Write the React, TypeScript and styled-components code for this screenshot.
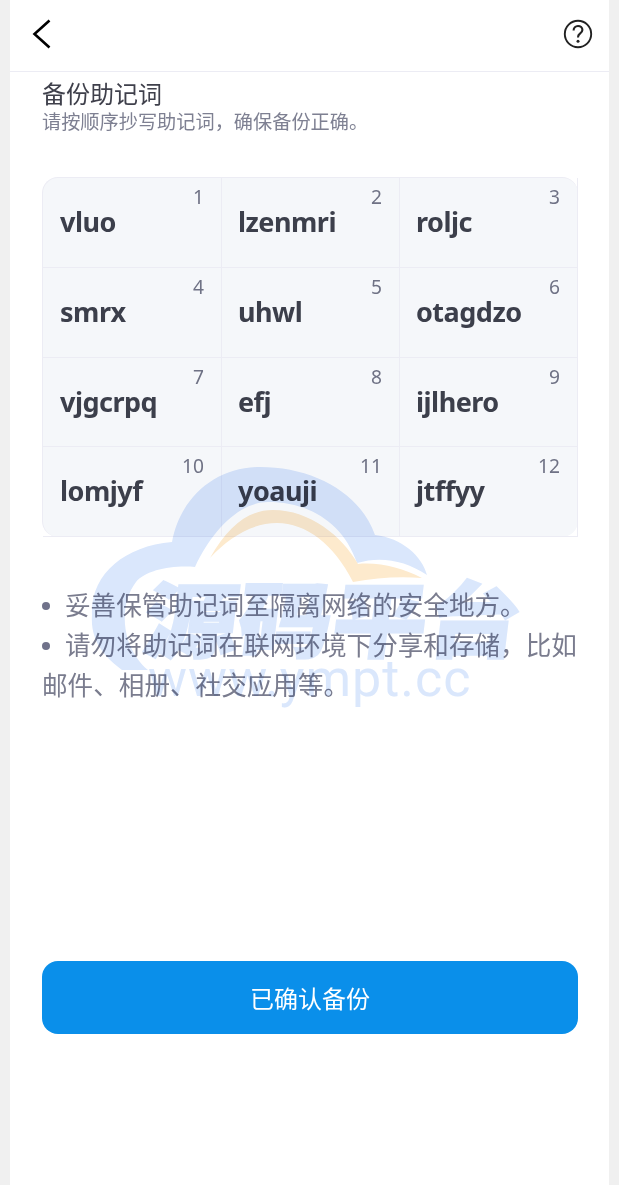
import React from "react";
import styled, { createGlobalStyle } from "styled-components";

const CJK = `"Noto Sans", "Noto Sans CJK SC", sans-serif`;

const Global = createGlobalStyle`
  html, body { margin: 0; padding: 0; background: #f0f0f0; }
  * { box-sizing: border-box; }
`;

const Page = styled.div`
  position: relative;
  margin: 0 10px;
  height: 1185px;
  overflow: hidden;
  background: #fff;
  font-family: ${CJK};
`;

const TopBar = styled.header`
  display: flex;
  align-items: center;
  justify-content: space-between;
  height: 72px;
  padding: 0 16px 4px 20px;
  border-bottom: 1px solid #ececf4;
`;

const IconButton = styled.div`
  display: flex;
  color: ${(p: { $color: string }) => p.$color};
`;

const Main = styled.main`
  display: flex;
  flex-direction: column;
  padding: 0 31px 0 32px;
`;

const Title = styled.h1`
  margin: 8px 0 0;
  font-size: 24px;
  line-height: 28px;
  font-weight: 400;
  color: #3f404b;
`;

const Subtitle = styled.p`
  margin: 0;
  font-size: 19.2px;
  line-height: 28px;
  color: #7e8092;
`;

const Grid = styled.section`
  display: grid;
  grid-template-columns: 179px 178px 178px;
  grid-template-rows: repeat(4, 89.75px);
  margin-top: 41px;
  background: #f5f7fa;
  border-radius: 16px;
  border-top: 1px solid #ececf4;
  border-left: 1px solid #ececf4;
`;

const Cell = styled.div`
  display: flex;
  flex-direction: column;
  padding: 8px 17px 0 16px;
  border-right: 1px solid #ececf4;
  border-bottom: 1px solid #ececf4;

  &:nth-child(3n + 1) {
    padding-left: 17px;
  }
`;

const Index = styled.span`
  align-self: flex-end;
  font-size: 19.2px;
  line-height: 21px;
  color: #6f7285;
`;

const Word = styled.span`
  margin-top: -3px;
  font-size: 27px;
  line-height: 36px;
  font-weight: 700;
  letter-spacing: -0.5px;
  color: #3c3f4b;
`;

const Tips = styled.ul`
  margin: 49px 0 0;
  padding: 0;
  list-style: none;
  font-size: 25.6px;
  line-height: 40px;
  color: #7a7c8e;
`;

const Tip = styled.li`
  &::before {
    content: "";
    display: inline-block;
    width: 8px;
    height: 8px;
    margin: 0 15px 4px 0;
    border-radius: 50%;
    background: #70728a;
    vertical-align: middle;
  }
`;

const Confirm = styled.button`
  display: block;
  width: 536px;
  height: 73px;
  margin-top: 255px;
  border: 0;
  border-radius: 16px;
  background: #0a8fea;
  color: #fff;
  font-family: inherit;
  font-size: 24px;
`;

const Watermark = styled.div`
  position: absolute;
  left: 70px;
  top: 460px;
  width: 460px;
  height: 260px;
  pointer-events: none;
  mix-blend-mode: multiply;
`;

const Cloud = styled.svg`
  display: block;
`;

const MarkName = styled.span`
  position: absolute;
  left: 70px;
  top: 115px;
  font-family: "Noto Sans CJK SC", sans-serif;
  font-size: 82px;
  line-height: 82px;
  font-weight: 900;
  white-space: nowrap;
  color: #dae7fc;
  -webkit-text-stroke: 2px #dae7fc;
  transform: scale(1.15, 1) skewX(-6deg);
  transform-origin: left top;
`;

const MarkUrl = styled.span`
  position: absolute;
  left: 68px;
  top: 189px;
  font-family: "Roboto", sans-serif;
  font-size: 52px;
  line-height: 60px;
  letter-spacing: 1px;
  white-space: nowrap;
  color: #dae7fc;
`;

const words = [
  "vluo", "lzenmri", "roljc",
  "smrx", "uhwl", "otagdzo",
  "vjgcrpq", "efj", "ijlhero",
  "lomjyf", "yoauji", "jtffyy",
];

export default function App() {
  return (
    <>
      <Global />
      <Page>
        <TopBar>
          <IconButton $color="#000">
            <svg width="24" height="32" viewBox="0 0 24 32" fill="none">
              <path d="M19.5 2.5 4.5 16 19.5 29.5" stroke="currentColor" strokeWidth="2.6" />
            </svg>
          </IconButton>
          <IconButton $color="#222">
            <svg width="30" height="30" viewBox="0 0 30 30" fill="none">
              <circle cx="15" cy="15" r="13.2" stroke="currentColor" strokeWidth="1.9" />
              <path
                d="M10.6 11.6C10.6 8.7 12.6 7 15 7C17.5 7 19.4 8.7 19.4 11C19.4 13 18 13.9 16.7 14.9C15.5 15.8 15 16.5 15 18.4"
                stroke="currentColor"
                strokeWidth="2.1"
              />
              <circle cx="15" cy="22.2" r="1.5" fill="currentColor" />
            </svg>
          </IconButton>
        </TopBar>
        <Main>
          <Title>备份助记词</Title>
          <Subtitle>请按顺序抄写助记词，确保备份正确。</Subtitle>
          <Grid>
            {words.map((w, i) => (
              <Cell key={w}>
                <Index>{i + 1}</Index>
                <Word>{w}</Word>
              </Cell>
            ))}
          </Grid>
          <Tips>
            <Tip>妥善保管助记词至隔离网络的安全地方。</Tip>
            <Tip>请勿将助记词在联网环境下分享和存储，比如邮件、相册、社交应用等。</Tip>
          </Tips>
          <Confirm>已确认备份</Confirm>
        </Main>
        <Watermark>
          <Cloud width="460" height="260" viewBox="0 0 460 260">
            <path
              d="M92 82C100 38 135 7 180 7C232 7 280 32 295 75C322 78 342 96 347 115C325 100 300 96 277 103C262 60 226 42 188 42C160 42 132 70 115 107C92 105 66 110 56 122C44 138 42 160 48 180C52 192 60 204 68 210L42 210C26 198 10 182 12 155C10 115 44 86 92 82Z"
              fill="#dae7fc"
            />
            <path
              d="M130 98C148 66 168 50 193 50C230 50 262 76 278 104C300 102 322 108 342 118C318 116 296 118 273 122C254 84 226 63 197 63C172 63 148 78 130 98Z"
              fill="#fdeacd"
            />
          </Cloud>
          <MarkName>源码平台</MarkName>
          <MarkUrl>www.ympt.cc</MarkUrl>
        </Watermark>
      </Page>
    </>
  );
}
